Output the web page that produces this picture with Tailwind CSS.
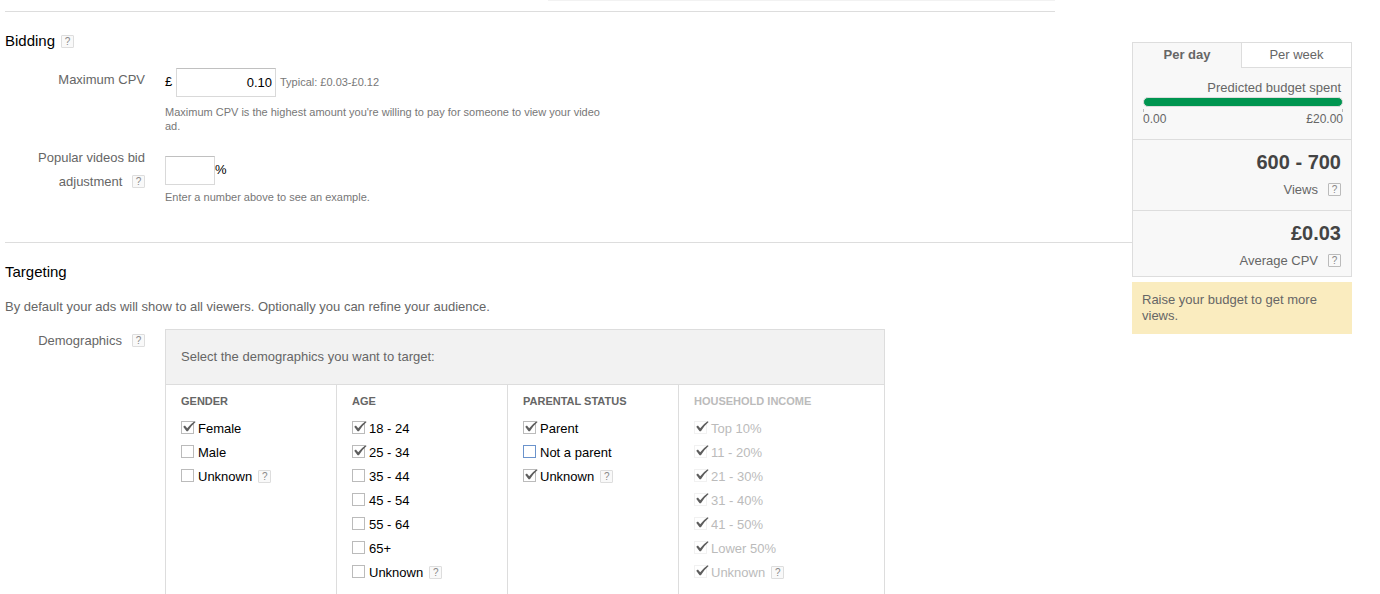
<!DOCTYPE html>
<html lang="en">
<head>
<meta charset="utf-8">
<meta name="viewport" content="width=device-width, initial-scale=1">
<title>Bidding and targeting</title>
<script src="https://cdn.jsdelivr.net/npm/@tailwindcss/browser@4"></script>
</head>
<body class="bg-white text-[13px] leading-6 text-[#666] font-['Liberation_Sans',Arial,sans-serif]">
<svg class="hidden" aria-hidden="true"><symbol id="check" viewBox="0 0 15 13"><path d="M2.2 5.8 3.9 4.6 6.2 7.2 Q9.6 2.8 13.6 .2 L14.6 1 Q10 4.8 6.9 10.2 L5.6 10.2 Z" fill="#5e5e5e"/></symbol></svg>

<div class="flex h-screen overflow-hidden pl-[5px] pr-7">
  <main class="flex min-w-0 flex-1 flex-col">
    <div class="mr-[77px] flex flex-col">
      <div class="h-px w-[507px] self-end bg-[#f2f2f2]"></div>
      <div class="mt-[10px] h-px bg-[#ddd]"></div>
    </div>

    <section class="pt-[17px]">
      <h2 class="flex h-6 items-center gap-[6px] text-[15px] text-black">Bidding
        <button type="button" aria-label="Help: bidding" class="size-[13px] shrink-0 rounded-[1px] border border-[#ddd] bg-[#f9f9f9] text-center text-[10px] leading-[11px] text-[#888]">?</button>
      </h2>
      <div class="mt-[15px] flex gap-5">
        <label for="cpv" class="w-[140px] shrink-0 text-right">Maximum CPV</label>
        <div>
          <div class="flex items-center">
            <span class="mb-[2px] w-[11px] text-black">£</span>
            <input id="cpv" type="text" value="0.10" class="h-[29px] w-[100px] border border-[#d9d9d9] border-t-[#c0c0c0] px-[3px] text-right text-[13px] text-black">
            <span class="mb-[2px] ml-1 text-[11px] text-[#777]">Typical: £0.03-£0.12</span>
          </div>
          <p class="mt-2 max-w-[440px] text-[11px] leading-[14px] text-[#777]">Maximum CPV is the highest amount you're willing to pay for someone to view your video ad.</p>
        </div>
      </div>
      <div class="mt-[13px] flex gap-5">
        <div class="w-[140px] shrink-0 text-right">
          <label for="adjust">Popular videos bid<br>adjustment</label>
          <button type="button" aria-label="Help: bid adjustment" class="mb-[2px] ml-[6px] size-[13px] rounded-[1px] border border-[#ddd] bg-[#f9f9f9] text-center align-middle text-[10px] leading-[11px] text-[#888]">?</button>
        </div>
        <div class="pt-[10px]">
          <div class="flex items-center">
            <input id="adjust" type="text" class="h-[29px] w-[50px] border border-[#d9d9d9] border-t-[#c0c0c0] px-[3px] text-right text-[13px] text-black">
            <span class="mb-[2px] text-black">%</span>
          </div>
          <p class="mt-[5px] text-[11px] leading-[14px] text-[#777]">Enter a number above to see an example.</p>
        </div>
      </div>
    </section>

    <section class="mt-[38px] flex min-h-0 flex-1 flex-col border-t border-[#ddd] pt-[17px]">
      <h2 class="text-[15px] leading-6 text-black">Targeting</h2>
      <p class="mt-[11px]">By default your ads will show to all viewers. Optionally you can refine your audience.</p>
      <div class="mt-[10px] flex min-h-0 flex-1 gap-5">
        <div class="flex h-6 w-[140px] shrink-0 items-center justify-end gap-[10px]">Demographics
          <button type="button" aria-label="Help: demographics" class="mb-[2px] size-[13px] shrink-0 rounded-[1px] border border-[#ddd] bg-[#f9f9f9] text-center text-[10px] leading-[11px] text-[#888]">?</button>
        </div>
        <div class="flex max-w-[720px] flex-1 flex-col border border-b-0 border-[#ddd]">
          <div class="border-b border-[#ddd] bg-[#f2f2f2] p-[15px]">Select the demographics you want to target:</div>
          <div class="grid flex-1 grid-cols-[171fr_171fr_171fr_205fr] divide-x divide-[#ddd] text-black">
            <fieldset class="pl-[15px] pt-2">
              <legend class="float-left mb-2 w-full text-[11px] leading-4 font-bold text-[#666]">GENDER</legend>
              <div class="clear-both">
                <label class="relative flex h-6 items-center gap-1"><input type="checkbox" checked class="peer mb-[3px] size-[13px] appearance-none border border-[#bbb]"><svg class="absolute left-0 top-1 hidden h-[13px] w-[15px] peer-checked:block"><use href="#check"/></svg>Female</label>
                <label class="flex h-6 items-center gap-1"><input type="checkbox" class="mb-[3px] size-[13px] appearance-none border border-[#bbb]">Male</label>
                <div class="flex h-6 items-center gap-[6px]"><label class="flex items-center gap-1"><input type="checkbox" class="mb-[3px] size-[13px] appearance-none border border-[#bbb]">Unknown</label><button type="button" aria-label="Help: unknown gender" class="mb-px size-[13px] rounded-[1px] border border-[#ddd] bg-[#f9f9f9] text-center text-[10px] leading-[11px] text-[#888]">?</button></div>
              </div>
            </fieldset>
            <fieldset class="pl-[15px] pt-2">
              <legend class="float-left mb-2 w-full text-[11px] leading-4 font-bold text-[#666]">AGE</legend>
              <div class="clear-both">
                <label class="relative flex h-6 items-center gap-1"><input type="checkbox" checked class="peer mb-[3px] size-[13px] appearance-none border border-[#bbb]"><svg class="absolute left-0 top-1 hidden h-[13px] w-[15px] peer-checked:block"><use href="#check"/></svg>18 - 24</label>
                <label class="relative flex h-6 items-center gap-1"><input type="checkbox" checked class="peer mb-[3px] size-[13px] appearance-none border border-[#bbb]"><svg class="absolute left-0 top-1 hidden h-[13px] w-[15px] peer-checked:block"><use href="#check"/></svg>25 - 34</label>
                <label class="flex h-6 items-center gap-1"><input type="checkbox" class="mb-[3px] size-[13px] appearance-none border border-[#bbb]">35 - 44</label>
                <label class="flex h-6 items-center gap-1"><input type="checkbox" class="mb-[3px] size-[13px] appearance-none border border-[#bbb]">45 - 54</label>
                <label class="flex h-6 items-center gap-1"><input type="checkbox" class="mb-[3px] size-[13px] appearance-none border border-[#bbb]">55 - 64</label>
                <label class="flex h-6 items-center gap-1"><input type="checkbox" class="mb-[3px] size-[13px] appearance-none border border-[#bbb]">65+</label>
                <div class="flex h-6 items-center gap-[6px]"><label class="flex items-center gap-1"><input type="checkbox" class="mb-[3px] size-[13px] appearance-none border border-[#bbb]">Unknown</label><button type="button" aria-label="Help: unknown age" class="mb-px size-[13px] rounded-[1px] border border-[#ddd] bg-[#f9f9f9] text-center text-[10px] leading-[11px] text-[#888]">?</button></div>
              </div>
            </fieldset>
            <fieldset class="pl-[15px] pt-2">
              <legend class="float-left mb-2 w-full text-[11px] leading-4 font-bold text-[#666]">PARENTAL STATUS</legend>
              <div class="clear-both">
                <label class="relative flex h-6 items-center gap-1"><input type="checkbox" checked class="peer mb-[3px] size-[13px] appearance-none border border-[#bbb]"><svg class="absolute left-0 top-1 hidden h-[13px] w-[15px] peer-checked:block"><use href="#check"/></svg>Parent</label>
                <label class="flex h-6 items-center gap-1"><input type="checkbox" class="mb-[3px] size-[13px] appearance-none border border-[#6b93cc]">Not a parent</label>
                <div class="flex h-6 items-center gap-[6px]"><label class="relative flex items-center gap-1"><input type="checkbox" checked class="peer mb-[3px] size-[13px] appearance-none border border-[#bbb]"><svg class="absolute left-0 top-1 hidden h-[13px] w-[15px] peer-checked:block"><use href="#check"/></svg>Unknown</label><button type="button" aria-label="Help: unknown parental status" class="mb-px size-[13px] rounded-[1px] border border-[#ddd] bg-[#f9f9f9] text-center text-[10px] leading-[11px] text-[#888]">?</button></div>
              </div>
            </fieldset>
            <fieldset class="pl-[15px] pt-2 text-[#bbb]">
              <legend class="float-left mb-2 w-full text-[11px] leading-4 font-bold">HOUSEHOLD INCOME</legend>
              <div class="clear-both">
                <label class="relative flex h-6 items-center gap-1"><input type="checkbox" checked disabled class="mb-[3px] size-[13px] appearance-none border border-[#f1f1f1]"><svg class="absolute left-0 top-1 h-[13px] w-[15px]"><use href="#check"/></svg>Top 10%</label>
                <label class="relative flex h-6 items-center gap-1"><input type="checkbox" checked disabled class="mb-[3px] size-[13px] appearance-none border border-[#f1f1f1]"><svg class="absolute left-0 top-1 h-[13px] w-[15px]"><use href="#check"/></svg>11 - 20%</label>
                <label class="relative flex h-6 items-center gap-1"><input type="checkbox" checked disabled class="mb-[3px] size-[13px] appearance-none border border-[#f1f1f1]"><svg class="absolute left-0 top-1 h-[13px] w-[15px]"><use href="#check"/></svg>21 - 30%</label>
                <label class="relative flex h-6 items-center gap-1"><input type="checkbox" checked disabled class="mb-[3px] size-[13px] appearance-none border border-[#f1f1f1]"><svg class="absolute left-0 top-1 h-[13px] w-[15px]"><use href="#check"/></svg>31 - 40%</label>
                <label class="relative flex h-6 items-center gap-1"><input type="checkbox" checked disabled class="mb-[3px] size-[13px] appearance-none border border-[#f1f1f1]"><svg class="absolute left-0 top-1 h-[13px] w-[15px]"><use href="#check"/></svg>41 - 50%</label>
                <label class="relative flex h-6 items-center gap-1"><input type="checkbox" checked disabled class="mb-[3px] size-[13px] appearance-none border border-[#f1f1f1]"><svg class="absolute left-0 top-1 h-[13px] w-[15px]"><use href="#check"/></svg>Lower 50%</label>
                <div class="flex h-6 items-center gap-[6px]"><label class="relative flex items-center gap-1"><input type="checkbox" checked disabled class="mb-[3px] size-[13px] appearance-none border border-[#f1f1f1]"><svg class="absolute left-0 top-1 h-[13px] w-[15px]"><use href="#check"/></svg>Unknown</label><button type="button" aria-label="Help: unknown income" class="mb-px size-[13px] rounded-[1px] border border-[#ddd] bg-[#f9f9f9] text-center text-[10px] leading-[11px] text-[#888]">?</button></div>
              </div>
            </fieldset>
          </div>
        </div>
      </div>
    </section>
  </main>

  <aside class="mt-[42px] w-[220px] shrink-0">
    <div class="border border-[#ddd] bg-[#f8f8f8]">
      <div class="grid grid-cols-[54fr_55fr]" role="tablist">
        <button type="button" role="tab" aria-selected="true" class="h-[25px] pb-[2px] font-bold">Per day</button>
        <button type="button" role="tab" aria-selected="false" class="h-[25px] border-b border-l border-[#ddd] bg-white">Per week</button>
      </div>
      <div class="border-b border-[#ddd] pt-2 pr-2 pb-[13px] pl-[10px]">
        <p id="spent" class="pr-[2px] text-right">Predicted budget spent</p>
        <div role="progressbar" aria-labelledby="spent" aria-valuenow="20" aria-valuemax="20" class="-mt-[3px] h-[10px] rounded-full border border-[#ddd] bg-[#009550]"></div>
        <div class="mt-[2px] h-[3px] border-x border-[#bbb]"></div>
        <div class="flex justify-between text-[12px] leading-[14px]"><span>0.00</span><span>£20.00</span></div>
      </div>
      <div class="border-b border-[#ddd] px-[10px] pt-[10px] pb-2">
        <p class="text-right text-[20px] leading-6 font-bold text-[#444]">600 - 700</p>
        <p class="mt-1 flex items-center justify-end gap-[10px]">Views
          <button type="button" aria-label="Help: views" class="mb-[2px] size-[13px] rounded-[1px] border border-[#bbb] bg-[#f9f9f9] text-center text-[10px] leading-[11px] text-[#888]">?</button></p>
      </div>
      <div class="px-[10px] pt-[10px] pb-[3px]">
        <p class="text-right text-[20px] leading-6 font-bold text-[#444]">£0.03</p>
        <p class="mt-1 flex items-center justify-end gap-[10px]">Average CPV
          <button type="button" aria-label="Help: average CPV" class="mb-[2px] size-[13px] rounded-[1px] border border-[#bbb] bg-[#f9f9f9] text-center text-[10px] leading-[11px] text-[#888]">?</button></p>
      </div>
    </div>
    <p class="mt-[5px] bg-[#faecbf] p-[10px] leading-4">Raise your budget to get more views.</p>
  </aside>
</div>
</body>
</html>
